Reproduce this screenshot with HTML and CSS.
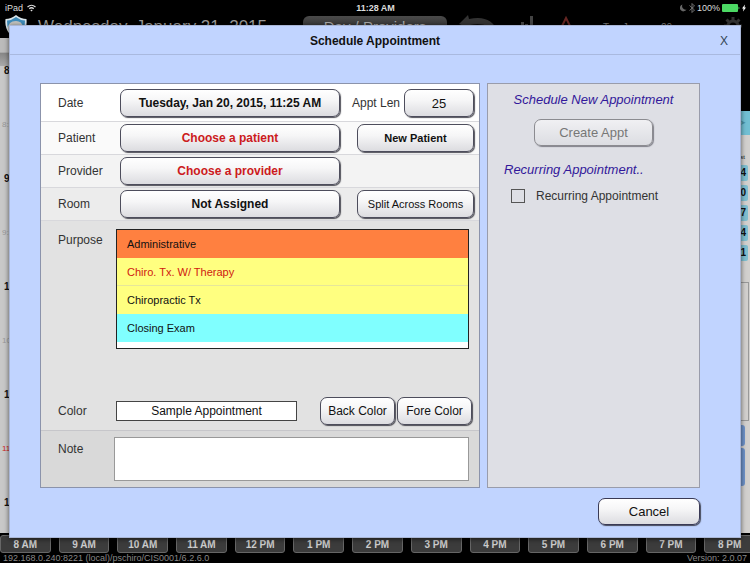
FILE: index.html
```html
<!DOCTYPE html>
<html lang="en">
<head>
    <meta charset="UTF-8">
    <meta name="viewport" content="width=device-width, initial-scale=1.0">
    <title>Schedule Appointment</title>
    <link rel="stylesheet" href="styles.css">
</head>
<body>
    <div class="app">
        <div class="status-bar">
            <div class="status-left">
                <span>iPad</span>
                <svg width="9" height="8" viewBox="0 0 18 16" fill="none" stroke="#ddd" stroke-width="2.4">
                    <path d="M1 6 Q9 -1 17 6"/>
                    <path d="M4.500 9.500 Q9 5.500 13.500 9.500"/>
                    <path d="M9 15 L6.500 12 Q9 10.500 11.500 12 Z" fill="#ddd" stroke="none"/>
                </svg>
            </div>
            <div class="status-time">11:28 AM</div>
            <div class="status-right">
                <svg width="7" height="8" viewBox="0 0 14 16"><path d="M5 1 A7 7 0 1 0 13 11 A7 7 0 0 1 5 1 Z" fill="#666"/></svg>
                <svg width="6" height="10" viewBox="0 0 12 20" fill="none" stroke="#888" stroke-width="1.6"><path d="M1 5 L11 14 L6 19 L6 1 L11 6 L1 15"/></svg>
                <span>100%</span>
                <svg width="18" height="8" viewBox="0 0 18 8"><rect width="16" height="8" rx="1" fill="#4cd964"/><path d="M16.500 2.500 Q18.500 4 16.500 5.500 Z" fill="#4cd964"/></svg>
                <svg width="4" height="8" viewBox="0 0 8 16"><path d="M6 1 L0 9 L3 9 L2 15 L8 7 L5 7 Z" fill="#fff"/></svg>
            </div>
        </div>

        <div class="nav-bar">
            <svg width="24" height="24" viewBox="0 0 48 48">
                <path d="M24 0 Q34 8 45 8 Q48 34 24 48 Q0 34 3 8 Q14 8 24 0 Z" fill="#d9e4ea"/>
                <path d="M24 4 Q33 11 42 11 Q43 33 24 44 Q5 33 6 11 Q15 11 24 4 Z" fill="#3f8cba"/>
                <path d="M8 28 Q8 12 24 12 Q36 12 38 24 L30 22 Q22 28 24 40 Q12 38 8 28 Z" fill="#c4c4c0"/>
                <path d="M27 21 Q36 17 40 28 Q34 25 28 29 Z" fill="#c98d4c"/>
            </svg>
            <div class="nav-date">Wednesday, January 21, 2015</div>
            <button class="nav-view">Day / Providers</button>
            <div class="nav-tools">
                <svg width="40" height="24" viewBox="0 0 40 24"><path d="M0 9 L9 0 L10 4 Q32 -1 39 17 Q28 7 11 10 L13 14 Z" fill="#333"/></svg>
                <svg width="14" height="24" viewBox="0 0 14 24" fill="#444"><rect x="0" y="7" width="3" height="12"/><rect x="4" y="9" width="3" height="10"/><rect x="9" y="1" width="3" height="18"/></svg>
                <svg width="18" height="24" viewBox="0 0 18 24"><path d="M9 3 L17 19 L1 19 Z" fill="none" stroke="#642522" stroke-width="2"/></svg>
                <span>Tue January 20</span>
            </div>
            <svg width="18" height="22" viewBox="0 0 18 22" fill="none" stroke="#333">
                <circle cx="9" cy="10" r="5" stroke-width="3"/>
                <path d="M9 1 V4 M9 16 V19 M0 10 H3 M15 10 H18 M2.500 3.500 L5 6 M13 14 L15.500 16.500 M15.500 3.500 L13 6 M5 14 L2.500 16.500" stroke-width="3"/>
            </svg>
        </div>

        <div class="calendar">
            <div class="time-column">
                <div class="time-head"></div>
                <div class="time">8:00</div>
                <div class="time half">8:30</div>
                <div class="time">9:00</div>
                <div class="time half">9:30</div>
                <div class="time">10:00</div>
                <div class="time half">10:30</div>
                <div class="time">11:00</div>
                <div class="time half now">11:28</div>
                <div class="time">12:00</div>
            </div>
            <div class="side-column">
                <div class="side-nav">&#10148;</div>
                <div class="counts">
                    <div class="counts-title">st</div>
                    <div class="count">4</div>
                    <div class="count">0</div>
                    <div class="count">7</div>
                    <div class="count">4</div>
                    <div class="count">1</div>
                </div>
                <div class="side-box"></div>
                <div class="side-appts">
                    <div class="appt"></div>
                    <div class="appt tall"></div>
                </div>
            </div>
        </div>

        <div class="hours">
            <button>8 AM</button>
            <button>9 AM</button>
            <button>10 AM</button>
            <button>11 AM</button>
            <button>12 PM</button>
            <button>1 PM</button>
            <button>2 PM</button>
            <button>3 PM</button>
            <button>4 PM</button>
            <button>5 PM</button>
            <button>6 PM</button>
            <button>7 PM</button>
            <button>8 PM</button>
        </div>

        <div class="app-footer">
            <span>192.168.0.240:8221 (local)/pschiro/CIS0001/6.2.6.0</span>
            <span>Version: 2.0.07</span>
        </div>
    </div>

    <!-- Schedule popup -->
    <div class="popup" role="dialog" aria-labelledby="popupTitle">
        <div class="popup-header">
            <h1 id="popupTitle">Schedule Appointment</h1>
            <button class="close-button">X</button>
        </div>

        <div class="popup-body">
            <form class="details">
                <div class="row row-date">
                    <label for="date">Date</label>
                    <button type="button" class="btn strong" id="date">Tuesday, Jan 20, 2015, 11:25 AM</button>
                    <div class="row-end">
                        <label for="length">Appt Len</label>
                        <button type="button" class="btn length" id="length">25</button>
                    </div>
                </div>
                <div class="row row-patient">
                    <label for="patient">Patient</label>
                    <button type="button" class="btn strong missing" id="patient">Choose a patient</button>
                    <div class="row-end">
                        <button type="button" class="btn strong wide">New Patient</button>
                    </div>
                </div>
                <div class="row row-provider">
                    <label for="provider">Provider</label>
                    <button type="button" class="btn strong missing" id="provider">Choose a provider</button>
                </div>
                <div class="row row-room">
                    <label for="room">Room</label>
                    <button type="button" class="btn strong" id="room">Not Assigned</button>
                    <div class="row-end">
                        <button type="button" class="btn wide">Split Across Rooms</button>
                    </div>
                </div>

                <div class="purpose">
                    <div class="field">
                        <span class="field-label" id="purposeLabel">Purpose</span>
                        <ul class="purpose-list" aria-labelledby="purposeLabel">
                            <li><button type="button" class="orange">Administrative</button></li>
                            <li><button type="button" class="yellow selected">Chiro. Tx. W/ Therapy</button></li>
                            <li><button type="button" class="yellow">Chiropractic Tx</button></li>
                            <li><button type="button" class="cyan">Closing Exam</button></li>
                        </ul>
                    </div>
                    <div class="color-row">
                        <label for="sample">Color</label>
                        <input type="text" id="sample" value="Sample Appointment" readonly>
                        <div class="color-buttons">
                            <button type="button" class="btn">Back Color</button>
                            <button type="button" class="btn">Fore Color</button>
                        </div>
                    </div>
                </div>

                <div class="note">
                    <label for="note">Note</label>
                    <textarea id="note"></textarea>
                </div>
            </form>

            <div class="schedule">
                <h2>Schedule New Appointment</h2>
                <button class="btn create" disabled>Create Appt</button>
                <h2 class="recurring-title">Recurring Appointment..</h2>
                <div class="check">
                    <input type="checkbox" id="recurring">
                    <label for="recurring">Recurring Appointment</label>
                </div>
            </div>
        </div>

        <div class="popup-footer">
            <button class="btn cancel">Cancel</button>
        </div>
    </div>
</body>
</html>
```

FILE: styles.css
```css
* {
    box-sizing: border-box;
}

body {
    margin: 0;
    background: #000;
    color: #111;
    font-family: "Liberation Sans", Arial, sans-serif;
    font-size: 12px;
    overflow: hidden;
}

button, input, textarea {
    font-family: inherit;
    font-size: inherit;
    color: inherit;
    margin: 0;
    padding: 0;
}

.app {
    height: 100vh;
    display: flex;
    flex-direction: column;
}

/* Status bar */
.status-bar {
    display: grid;
    grid-template-columns: 1fr auto 1fr;
    align-items: center;
    height: 15px;
    padding: 0 4px 0 5px;
    color: #ddd;
    font-size: 9px;
}

.status-left, .status-right {
    display: flex;
    align-items: center;
    gap: 4px;
}

.status-right {
    justify-content: flex-end;
    gap: 2px;
}

.status-time {
    font-weight: bold;
}

/* Navigation */
.nav-bar {
    display: flex;
    align-items: center;
    height: 23px;
    padding: 0 8px 0 4px;
    color: #777;
}

.nav-date {
    margin-left: 10px;
    font-size: 17px;
    color: #999;
    white-space: nowrap;
}

.nav-view {
    width: 144px;
    height: 22px;
    margin-left: 36px;
    border: none;
    border-radius: 6px;
    background: linear-gradient(#4a4a4a, #222);
    color: #aaa;
    font-size: 15px;
}

.nav-tools {
    flex: 1;
    display: flex;
    align-items: center;
    gap: 22px;
    margin-left: 12px;
    font-size: 10px;
    white-space: nowrap;
}

.nav-tools span {
    margin-left: 6px;
    padding-top: 2px;
}

/* Calendar behind the popup */
.calendar {
    flex: 1;
    min-height: 0;
    display: flex;
    justify-content: space-between;
    background: #c8c8c8;
}

.time-column {
    width: 40px;
    overflow: hidden;
}

.time-head {
    height: 28px;
    background: linear-gradient(#bbb 50%, #888 55%, #aaa);
}

.time {
    height: 54px;
    padding-left: 4px;
    font-size: 10px;
    line-height: 10px;
    font-weight: bold;
}

.time.half {
    padding-left: 2px;
    font-size: 8px;
    font-weight: normal;
    color: #999;
}

.time.now {
    color: #c22;
}

.side-column {
    width: 30px;
    background: #d2d0ce;
    border-top: 73px solid #000;
}

.side-nav {
    height: 24px;
    background: #72bfd3;
    color: #4a91a5;
    font-size: 7px;
    line-height: 24px;
    text-align: right;
    padding-right: 4px;
}

.counts {
    display: flex;
    flex-direction: column;
    gap: 4px;
    height: 147px;
    padding: 19px 2px 0;
    text-align: right;
}

.counts-title {
    height: 7px;
    padding-right: 3px;
    font-size: 6px;
    line-height: 7px;
}

.count {
    height: 16px;
    padding-right: 2px;
    border-radius: 2px;
    background: #7fbfd0;
    font-size: 10px;
    font-weight: bold;
    line-height: 16px;
}

.side-box {
    height: 139px;
    margin-right: 1px;
    border: 1px solid #999;
}

.side-appts {
    display: flex;
    flex-direction: column;
    gap: 2px;
    padding: 4px 5px 0 0;
}

.appt {
    height: 21px;
    border-radius: 3px;
    background: #6f93ca;
}

.appt.tall {
    height: 38px;
}

/* Hour buttons */
.hours {
    display: flex;
    gap: 8px;
    height: 20px;
    margin-right: -5px;
    padding: 2px 0 0;
}

.hours button {
    flex: 1;
    border: 1px solid #666;
    border-radius: 3px;
    background: #3c3c3c;
    color: #ccc;
    font-size: 10px;
    font-weight: bold;
    white-space: nowrap;
}

.app-footer {
    display: flex;
    justify-content: space-between;
    height: 10px;
    padding: 0 3px;
    color: #888;
    font-size: 9px;
    line-height: 10px;
}

/* Popup */
.popup {
    position: absolute;
    top: 25px;
    right: 9px;
    bottom: 25px;
    left: 9px;
    display: flex;
    flex-direction: column;
    border: 1px solid #a9b6d6;
    background: #c1d4ff;
    box-shadow: 0 1px 5px rgba(0, 0, 0, 0.6);
}

.popup-header {
    display: grid;
    grid-template-columns: 1fr auto 1fr;
    align-items: center;
    height: 29px;
    padding: 2px 12px 0;
    border-bottom: 1px solid #a9b9df;
}

.popup-header h1 {
    grid-column: 2;
    margin: 0;
    font-size: 12px;
}

.close-button {
    justify-self: end;
    border: none;
    background: none;
    color: #345;
    font-size: 12px;
}

.popup-body {
    flex: 1;
    min-height: 0;
    display: grid;
    grid-template-columns: 440fr 213fr;
    gap: 7px;
    padding: 28px 40px 0 30px;
}

.details {
    display: flex;
    flex-direction: column;
    border: 1px solid #8b93ab;
    background: #fff;
}

label, .field-label {
    color: #333;
    white-space: nowrap;
}

.row {
    display: grid;
    grid-template-columns: 62px 220fr 134fr;
    align-items: center;
    padding: 2px 5px 2px 17px;
    border-bottom: 1px solid #d8d8dc;
}

.row-date {
    padding-top: 5px;
    padding-bottom: 4px;
}

.row-patient {
    background: #fafafa;
}

.row-provider {
    background: #f3f3f3;
}

.row-room {
    background: #ececec;
}

.row-end {
    display: flex;
    align-items: center;
    justify-content: flex-end;
    gap: 4px;
}

.btn {
    height: 28px;
    border: 1px solid #4d4d5c;
    border-radius: 7px;
    background: linear-gradient(#fff, #f6f6f7 40%, #dcdce0);
    box-shadow: 1px 1px 1px rgba(40, 40, 50, 0.8);
    color: #111;
    font-size: 12px;
    white-space: nowrap;
}

.btn.strong {
    font-weight: bold;
}

.btn.missing {
    color: #cc1a20;
}

.btn.length {
    width: 70px;
    font-size: 13px;
}

.btn.wide {
    width: 117px;
    font-size: 11px;
}

/* Purpose and colors */
.purpose {
    flex: 1;
    display: flex;
    flex-direction: column;
    justify-content: space-between;
    padding: 8px 7px 5px 17px;
    border-bottom: 1px solid #c6c6ca;
    background: #e2e2e2;
}

.field {
    display: grid;
    grid-template-columns: 58px 1fr;
    padding-right: 3px;
}

.field-label {
    padding-top: 4px;
}

.purpose-list {
    height: 120px;
    margin: 0;
    padding: 0;
    border: 1px solid #222;
    background: #fff;
    list-style: none;
}

.purpose-list button {
    display: block;
    width: 100%;
    height: 28px;
    padding-left: 10px;
    border: none;
    color: #111;
    font-size: 11px;
    text-align: left;
}

.purpose-list .orange {
    background: #ff8040;
}

.purpose-list .yellow {
    background: #ffff80;
}

.purpose-list .cyan {
    background: #80ffff;
}

.purpose-list .selected {
    border-bottom: 1px solid #e6e69a;
    color: #d02010;
}

.color-row {
    display: grid;
    grid-template-columns: 58px 181fr 175fr;
    align-items: center;
}

.color-row input {
    width: 100%;
    height: 20px;
    border: 1px solid #444;
    background: #fff;
    text-align: center;
}

.color-buttons {
    display: flex;
    justify-content: flex-end;
    gap: 2px;
}

.color-buttons .btn {
    width: 75px;
}

.note {
    display: grid;
    grid-template-columns: 56px 1fr;
    height: 56px;
    padding: 6px 10px 6px 17px;
    background: #d9d9d9;
}

.note label {
    padding-top: 5px;
}

.note textarea {
    width: 100%;
    height: 44px;
    border: 1px solid #999;
    background: #fff;
    resize: none;
}

/* Right panel */
.schedule {
    display: flex;
    flex-direction: column;
    border: 1px solid #999cab;
    background: #dedfe5;
}

.schedule h2 {
    margin: 8px 0 12px;
    color: #32189a;
    font-size: 13px;
    font-style: italic;
    font-weight: normal;
    line-height: 15px;
    text-align: center;
}

.btn.create {
    align-self: center;
    width: 119px;
    height: 27px;
    border-color: #8b8b90;
    background: linear-gradient(#f0f0f3, #dcdde2);
    box-shadow: 1px 1px 1px rgba(90, 90, 100, 0.7);
    color: #777;
    font-size: 13px;
}

.schedule .recurring-title {
    margin: 16px 16px 12px;
    text-align: left;
}

.check {
    display: flex;
    align-items: center;
    gap: 11px;
    padding-left: 23px;
}

.check input {
    appearance: none;
    width: 14px;
    height: 14px;
    border: 1px solid #555;
}

.check input:checked {
    background: #32189a;
}

.popup-footer {
    display: flex;
    justify-content: flex-end;
    padding: 10px 40px 12px;
}

.btn.cancel {
    width: 102px;
    height: 27px;
    border-color: #3a3a55;
    font-size: 13px;
}
```
